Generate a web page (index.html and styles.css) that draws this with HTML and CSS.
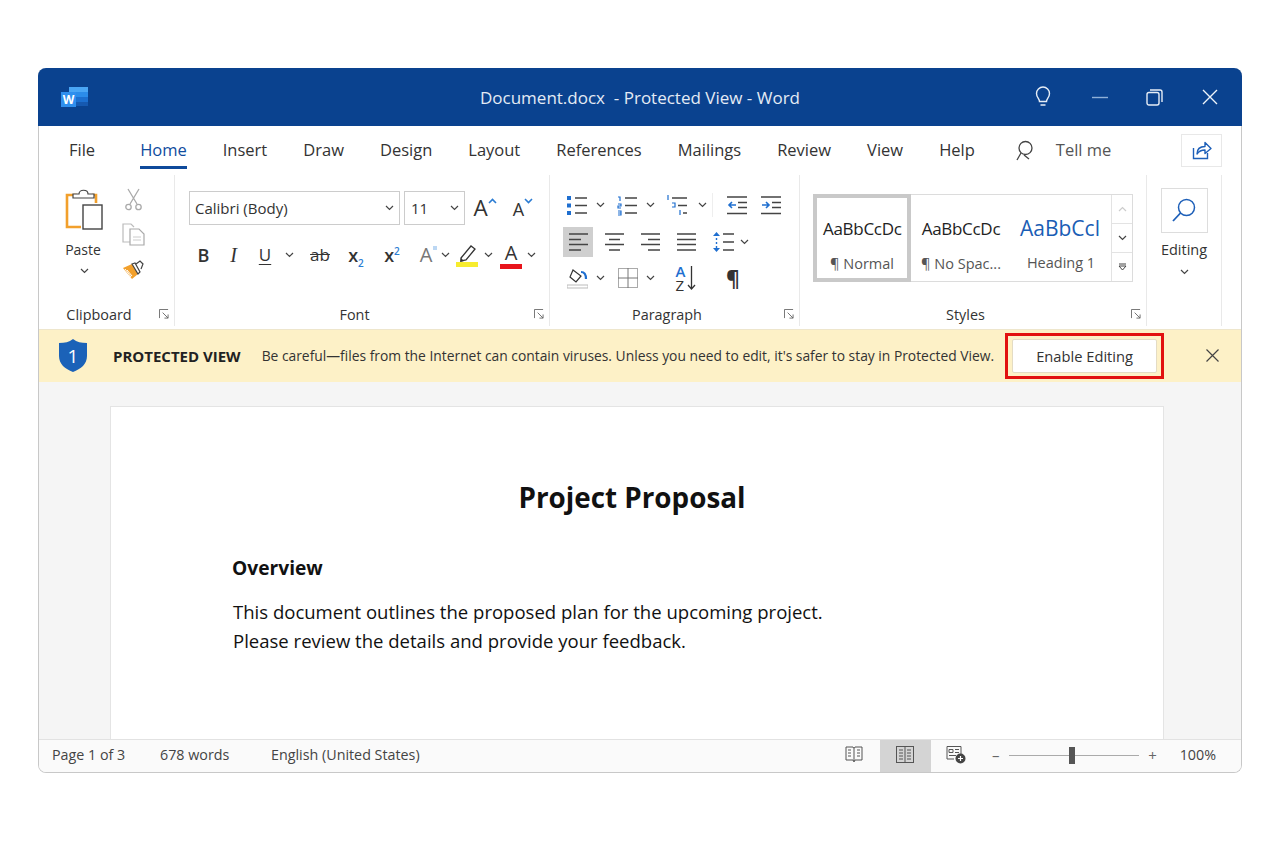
FILE: index.html
```html
<!DOCTYPE html>
<html lang="en">
<head>
  <meta charset="UTF-8">
  <title>Document.docx - Protected View - Word</title>
  <link rel="stylesheet" href="styles.css">
</head>
<body>
  <svg class="defs" width="0" height="0">
    <symbol id="chev" viewBox="0 0 9 6"><path d="M1 1l3.5 3.5L8 1" fill="none" stroke="#444" stroke-width="1.2"/></symbol>
    <symbol id="launch" viewBox="0 0 11 11"><path d="M.5 10V.5H10M4 4l6 6M10 6v4H6" fill="none" stroke="#666" stroke-width="1"/></symbol>
  </svg>

  <div class="window">
    <div class="titlebar">
      <svg class="logo" width="27" height="20" viewBox="0 0 27 20">
        <rect x="8" y="0" width="19" height="5" fill="#4aa6f5"/>
        <rect x="8" y="5" width="19" height="5" fill="#2b8cea"/>
        <rect x="8" y="10" width="19" height="5" fill="#1c6fd0"/>
        <rect x="8" y="15" width="19" height="4" fill="#1659b0"/>
        <rect x="0" y="5" width="15" height="15" fill="#2f8fee"/>
        <text x="7.5" y="17" text-anchor="middle" class="logo-w">W</text>
      </svg>
      <div class="doc-title">Document.docx&nbsp; - Protected View - Word</div>
      <div class="win-btns">
        <svg width="20" height="24" viewBox="0 0 20 24"><path d="M6.5 16.5c0-3-3-4-3-8a6.5 6.5 0 0 1 13 0c0 4-3 5-3 8zM7.5 20h5" fill="none" stroke="#e6edf6" stroke-width="1.4"/></svg>
        <svg width="16" height="16" viewBox="0 0 16 16"><path d="M0 8.5h16" stroke="#8fb0d8" stroke-width="1.4"/></svg>
        <svg width="17" height="17" viewBox="0 0 17 17"><rect x="1" y="3.5" width="12" height="12.5" rx="2" fill="none" stroke="#e6edf6" stroke-width="1.4"/><path d="M4 1h10a2 2 0 0 1 2 2v10" fill="none" stroke="#e6edf6" stroke-width="1.4"/></svg>
        <svg width="16" height="16" viewBox="0 0 16 16"><path d="M1 1l14 14M15 1L1 15" stroke="#eef3f9" stroke-width="1.4"/></svg>
      </div>
    </div>

    <div class="tabs">
      <span class="tab tab-file">File</span>
      <span class="tab active">Home</span>
      <span class="tab">Insert</span>
      <span class="tab">Draw</span>
      <span class="tab">Design</span>
      <span class="tab">Layout</span>
      <span class="tab">References</span>
      <span class="tab">Mailings</span>
      <span class="tab">Review</span>
      <span class="tab">View</span>
      <span class="tab">Help</span>
      <svg class="tell-icon" width="20" height="22" viewBox="0 0 20 22"><circle cx="10.5" cy="8" r="6.5" fill="none" stroke="#444" stroke-width="1.3"/><path d="M6 13l-4 7M9 15l5 4" fill="none" stroke="#444" stroke-width="1.3"/></svg>
      <span class="tab tell">Tell me</span>
      <div class="share">
        <svg width="20" height="19" viewBox="0 0 20 19"><path d="M1.5 7v10.5h14V12" fill="none" stroke="#1d5fb8" stroke-width="1.4"/><path d="M5 13c0-5 3-7.500 8-7.500V1.500l6 6-6 5V9c-4 0-6 1-8 4z" fill="none" stroke="#1d5fb8" stroke-width="1.4" stroke-linejoin="round"/></svg>
      </div>
    </div>

    <div class="ribbon">
      <section class="group group-clip">
        <div class="group-body clip-body">
          <div class="paste">
            <svg width="40" height="43" viewBox="0 0 40 43"><path d="M13 7H3v32h14" fill="none" stroke="#f2a02c" stroke-width="2.6"/><path d="M28 7h4v8" fill="none" stroke="#f2a02c" stroke-width="2.6"/><path d="M9 10V6h6c0-5 9-5 9 0h6v4z" fill="#fff" stroke="#444" stroke-width="1.200"/><rect x="19" y="17" width="19" height="24" fill="#fff" stroke="#444" stroke-width="1.400"/></svg>
            <span class="paste-label">Paste</span>
            <svg class="chev" width="9" height="6"><use href="#chev"/></svg>
          </div>
          <div class="clip-tools">
            <svg width="17" height="23" viewBox="0 0 17 23"><path d="M3 1l9 15M14 1L5 16" stroke="#aaa" stroke-width="1.300" fill="none"/><circle cx="3.500" cy="19" r="2.700" fill="none" stroke="#aaa" stroke-width="1.300"/><circle cx="13.500" cy="19" r="2.700" fill="none" stroke="#aaa" stroke-width="1.300"/></svg>
            <svg width="23" height="23" viewBox="0 0 23 23"><path d="M8 19H1V1h8l3 3" fill="none" stroke="#bbb" stroke-width="1.200"/><path d="M8 6h9l5 5v11H8z" fill="#fff" stroke="#aaa" stroke-width="1.200"/><path d="M11 14h8M11 17h8" stroke="#ccc" stroke-width="1"/></svg>
            <svg width="22" height="22" viewBox="0 0 22 22"><path d="M1 10l9-4 6 10-6 5z" fill="#f2a02c"/><path d="M5 12l5 6M3 11l6 8" stroke="#fff" stroke-width="1"/><path d="M10 6l6 10 2-2-5-9zM14 6l4-3 3 3-2 5" fill="#fff" stroke="#444" stroke-width="1.200"/></svg>
          </div>
        </div>
        <div class="group-label"><span>Clipboard</span><svg class="launch" width="10" height="10"><use href="#launch"/></svg></div>
      </section>

      <section class="group group-font">
        <div class="group-body font-body">
          <div class="font-row-top">
            <div class="select select-font"><span>Calibri (Body)</span><svg width="9" height="6"><use href="#chev"/></svg></div>
            <div class="select select-size"><span>11</span><svg width="9" height="6"><use href="#chev"/></svg></div>
            <div class="grow-btn">
              <span class="big-a">A</span>
              <svg width="9" height="6" viewBox="0 0 9 6"><path d="M1 5l3.500-3.500L8 5" fill="none" stroke="#2b7cd3" stroke-width="1.600"/></svg>
            </div>
            <div class="grow-btn shrink">
              <span class="small-a">A</span>
              <svg width="9" height="6" viewBox="0 0 9 6"><path d="M1 1l3.500 3.500L8 1" fill="none" stroke="#2b7cd3" stroke-width="1.600"/></svg>
            </div>
          </div>
          <div class="font-row-bottom">
            <span class="fmt fmt-b">B</span>
            <span class="fmt fmt-i">I</span>
            <span class="fmt fmt-u">U</span>
            <svg width="9" height="6"><use href="#chev"/></svg>
            <span class="fmt fmt-s">ab</span>
            <span class="fmt fmt-x">x<sub>2</sub></span>
            <span class="fmt fmt-x">x<sup>2</sup></span>
            <span class="fmt fmt-effect">A</span>
            <svg width="9" height="6"><use href="#chev"/></svg>
            <svg width="22" height="24" viewBox="0 0 22 24"><path d="M5 15L15 3l4 3-9 11-5 1z" fill="#fff" stroke="#333" stroke-width="1.300"/><path d="M5 15l3 3-4 1z" fill="#333"/><rect x="0" y="19" width="22" height="5" fill="#f7ec2e"/></svg>
            <svg width="9" height="6"><use href="#chev"/></svg>
            <span class="fmt fmt-color">A</span>
            <svg width="9" height="6"><use href="#chev"/></svg>
          </div>
        </div>
        <div class="group-label"><span>Font</span><svg class="launch" width="10" height="10"><use href="#launch"/></svg></div>
      </section>

      <section class="group group-para">
        <div class="group-body para-body">
          <div class="para-row para-row-1">
            <svg width="21" height="21" viewBox="0 0 21 21"><g fill="#1f6fd0"><rect x="0" y="1" width="4" height="4"/><rect x="0" y="8.500" width="4" height="4"/><rect x="0" y="16" width="4" height="4"/></g><path d="M8 3h12M8 10.500h12M8 18h12" stroke="#444" stroke-width="1.300"/></svg>
            <svg width="9" height="6"><use href="#chev"/></svg>
            <svg width="21" height="21" viewBox="0 0 21 21"><path d="M1 2h2v4M1 9h3v2H1v2h3M1 16h3v4H1M1 18h3" fill="none" stroke="#1f6fd0" stroke-width="1.200"/><path d="M8 3h12M8 10.500h12M8 18h12" stroke="#444" stroke-width="1.300"/></svg>
            <svg width="9" height="6"><use href="#chev"/></svg>
            <svg width="21" height="21" viewBox="0 0 21 21"><path d="M1 0v5M5 8h3v4H5M13 15v5" fill="none" stroke="#1f6fd0" stroke-width="1.200"/><path d="M5 3h15M11 10.500h9M16 18h4" stroke="#444" stroke-width="1.300"/></svg>
            <svg width="9" height="6"><use href="#chev"/></svg>
            <span class="sep"></span>
            <svg width="20" height="19" viewBox="0 0 20 19"><path d="M0 1h20M11 6.500h9M11 11.500h9M0 17.500h20" stroke="#444" stroke-width="1.300"/><path d="M9 9H2M5 6L2 9l3 3" fill="none" stroke="#1f6fd0" stroke-width="1.600"/></svg>
            <svg width="20" height="19" viewBox="0 0 20 19"><path d="M0 1h20M11 6.500h9M11 11.500h9M0 17.500h20" stroke="#444" stroke-width="1.300"/><path d="M1 9h7M5 6l3 3-3 3" fill="none" stroke="#1f6fd0" stroke-width="1.600"/></svg>
          </div>
          <div class="para-row para-row-2">
            <div class="align-on"><svg width="19" height="18" viewBox="0 0 19 18"><path d="M0 1h19M0 6.500h12M0 11.500h19M0 17h12" stroke="#444" stroke-width="1.300"/></svg></div>
            <svg width="19" height="18" viewBox="0 0 19 18"><path d="M0 1h19M4 6.500h11M0 11.500h19M4 17h11" stroke="#444" stroke-width="1.300"/></svg>
            <svg width="19" height="18" viewBox="0 0 19 18"><path d="M0 1h19M7 6.500h12M0 11.500h19M7 17h12" stroke="#444" stroke-width="1.300"/></svg>
            <svg width="19" height="18" viewBox="0 0 19 18"><path d="M0 1h19M0 6.500h19M0 11.500h19M0 17h19" stroke="#444" stroke-width="1.300"/></svg>
            <svg width="21" height="20" viewBox="0 0 21 20"><path d="M3.500 2v16" stroke="#1f6fd0" stroke-width="1.400" stroke-dasharray="2 2"/><path d="M0 4l3.500-4L7 4zM0 16l3.500 4L7 16z" fill="#1f6fd0"/><path d="M10 2h11M10 10h11M10 18h11" stroke="#444" stroke-width="1.300"/></svg>
            <svg width="9" height="6"><use href="#chev"/></svg>
          </div>
          <div class="para-row para-row-3">
            <svg width="21" height="22" viewBox="0 0 21 22"><path d="M6 3l8 6-5 6-6-5z" fill="#fff" stroke="#333" stroke-width="1.200"/><path d="M14 5c4 0 5 3 5 7" fill="none" stroke="#1f6fd0" stroke-width="2.200"/><path d="M0 18h21v3H0z" fill="#fff" stroke="#bbb" stroke-width="1"/></svg>
            <svg width="9" height="6"><use href="#chev"/></svg>
            <svg width="20" height="20" viewBox="0 0 20 20"><rect x=".5" y=".5" width="19" height="19" fill="none" stroke="#aaa"/><path d="M10 0v20M0 10h20" stroke="#777" stroke-width="1"/></svg>
            <svg width="9" height="6"><use href="#chev"/></svg>
            <div class="sort"><span class="sort-letters"><span class="sort-a">A</span><span>Z</span></span><svg width="9" height="24" viewBox="0 0 9 24"><path d="M4.500 0v23M1 19l3.500 4L8 19" fill="none" stroke="#333" stroke-width="1.300"/></svg></div>
            <span class="pilcrow">¶</span>
          </div>
        </div>
        <div class="group-label"><span>Paragraph</span><svg class="launch" width="10" height="10"><use href="#launch"/></svg></div>
      </section>

      <section class="group group-styles">
        <div class="group-body styles-body">
          <div class="gallery">
            <div class="style-item style-normal">
              <div class="preview">AaBbCcDc</div>
              <div class="style-name">¶ Normal</div>
            </div>
            <div class="style-item">
              <div class="preview">AaBbCcDc</div>
              <div class="style-name">¶ No Spac...</div>
            </div>
            <div class="style-item">
              <div class="preview preview-head">AaBbCcl</div>
              <div class="style-name">Heading 1</div>
            </div>
            <div class="scroller">
              <div><svg width="9" height="6" viewBox="0 0 9 6"><path d="M1 5l3.500-3.500L8 5" fill="none" stroke="#ccc" stroke-width="1.200"/></svg></div>
              <div><svg width="9" height="6"><use href="#chev"/></svg></div>
              <div><svg width="9" height="8" viewBox="0 0 9 8"><path d="M1 1h7M1 3l3.500 4L8 3z" fill="none" stroke="#444" stroke-width="1"/></svg></div>
            </div>
          </div>
        </div>
        <div class="group-label"><span>Styles</span><svg class="launch" width="10" height="10"><use href="#launch"/></svg></div>
      </section>

      <section class="group group-edit">
        <div class="edit-body">
          <div class="edit-box"><svg width="24" height="25" viewBox="0 0 24 25"><circle cx="14.500" cy="9.500" r="8" fill="none" stroke="#1d5fb8" stroke-width="1.500"/><path d="M8.500 15L1 23" stroke="#1d5fb8" stroke-width="1.800"/></svg></div>
          <span class="edit-label">Editing</span>
          <svg width="9" height="6"><use href="#chev"/></svg>
        </div>
      </section>
    </div>

    <div class="banner">
      <svg class="shield" width="28" height="33" viewBox="0 0 28 33">
        <path d="M14 0c4 3 8 4 14 4v13c0 8-6 13-14 16C6 30 0 25 0 17V4c6 0 10-1 14-4z" fill="#1b62b8"/>
        <text x="14" y="24" text-anchor="middle" class="shield-num">1</text>
      </svg>
      <strong class="banner-title">PROTECTED VIEW</strong>
      <span class="banner-text">Be careful—files from the Internet can contain viruses. Unless you need to edit, it's safer to stay in Protected View.</span>
      <div class="enable-wrap"><button class="enable">Enable Editing</button></div>
      <svg class="banner-close" width="13" height="13" viewBox="0 0 13 13"><path d="M.5.500l12 12M12.500.500l-12 12" stroke="#444" stroke-width="1.200"/></svg>
    </div>

    <div class="doc-area">
      <div class="page">
        <h1>Project Proposal</h1>
        <h2>Overview</h2>
        <p>This document outlines the proposed plan for the upcoming project.<br>Please review the details and provide your feedback.</p>
      </div>
    </div>

    <div class="statusbar">
      <span class="st-page">Page 1 of 3</span>
      <span class="st-words">678 words</span>
      <span class="st-lang">English (United States)</span>
      <div class="st-right">
        <div class="view-btn"><svg width="18" height="17" viewBox="0 0 18 17"><path d="M9 2.500L8 1H1v13h7l1 2 1-2h7V1h-7zM9 2.500V15M3 4h3M3 7h3M3 10h3M12 4h3M12 7h3M12 10h3" fill="none" stroke="#555" stroke-width="1"/></svg></div>
        <div class="view-btn view-on"><svg width="18" height="17" viewBox="0 0 18 17"><rect x=".5" y=".5" width="17" height="16" fill="none" stroke="#555"/><path d="M9 0v17M3 4h4M3 7h4M3 10h4M3 13h4M11 4h4M11 7h4M11 10h4M11 13h4" stroke="#555" stroke-width="1"/></svg></div>
        <div class="view-btn"><svg width="20" height="18" viewBox="0 0 20 18"><path d="M1 .500h14v8M1 .500V13h7M3 3.500h4v3H3zM9 3.500h4M9 6.500h4M3 9.500h7" fill="none" stroke="#555" stroke-width="1"/><circle cx="14.500" cy="12.500" r="5" fill="#444"/><path d="M14.500 10v5M12 12.500h5" stroke="#fff" stroke-width="1.200"/></svg></div>
        <span class="zoom-sign zoom-minus">–</span>
        <div class="slider"><span class="thumb"></span></div>
        <span class="zoom-sign">+</span>
        <span class="zoom-val">100%</span>
      </div>
    </div>
  </div>
</body>
</html>
```

FILE: styles.css
```css
* {
  box-sizing: border-box;
}

body {
  margin: 0;
  padding: 68px 38px 0;
  background: #fff;
  font-family: "Open Sans", "Noto Sans", sans-serif;
  color: #333;
}

.defs {
  display: block;
  height: 0;
}

svg {
  display: block;
  flex: none;
}

.window {
  height: 705px;
  border: 1px solid #c8c8c8;
  border-top: 0;
  border-radius: 8px;
  display: flex;
  flex-direction: column;
  background: #fff;
}

/* title bar */
.titlebar {
  height: 58px;
  flex: none;
  margin: 0 -1px;
  border-radius: 8px 8px 0 0;
  background: #0a428f;
  display: flex;
  align-items: center;
  padding: 0 24px 0 23px;
  color: #e4ebf5;
}

.logo {
  margin-top: -1px;
}

.logo-w {
  font: bold 12px "Open Sans", sans-serif;
  fill: #fff;
}

.doc-title {
  flex: 1;
  text-align: center;
  font-size: 17px;
  margin-left: 159px;
}

.win-btns {
  display: flex;
  align-items: center;
  width: 185px;
  justify-content: space-between;
}

/* tabs */
.tabs {
  height: 49px;
  flex: none;
  display: flex;
  align-items: center;
  padding: 0 19px 0 30px;
  gap: 36px;
  font-size: 16.500px;
}

.tab {
  position: relative;
  line-height: 46px;
  margin-bottom: 2px;
}

.tab-file {
  margin-right: 9px;
}

.tab.active {
  color: #0f4c9e;
}

.tab.active::after {
  content: "";
  position: absolute;
  left: 0;
  right: 0;
  bottom: 4px;
  height: 3px;
  background: #0f4a9b;
}

.tell-icon {
  margin-left: 4px;
}

.tell {
  margin-left: -15px;
  color: #555;
}

.share {
  margin-left: auto;
  width: 41px;
  height: 33px;
  border: 1px solid #e8e8e8;
  display: flex;
  align-items: center;
  justify-content: center;
}

/* ribbon */
.ribbon {
  height: 154px;
  flex: none;
  display: flex;
}

.group {
  display: flex;
  flex-direction: column;
  border-right: 1px solid #e9e9e9;
  margin-bottom: 3px;
}

.group-clip { width: 136px; }
.group-font { width: 375px; }
.group-para { width: 250px; }
.group-styles { width: 347px; }
.group-edit { width: 75px; }

.group-body {
  flex: 1;
}

.group-label {
  display: flex;
  align-items: center;
  height: 24px;
  font-size: 14.400px;
  color: #333;
  padding-right: 4px;
}

.group-label span {
  flex: 1;
  text-align: center;
}

.launch {
  margin-right: 1px;
}

/* clipboard */
.clip-body {
  display: flex;
  padding: 13px 0 0 25px;
  gap: 17px;
}

.paste {
  width: 40px;
  display: flex;
  flex-direction: column;
  align-items: center;
}

.paste-label {
  font-size: 14px;
  margin: 9px 2px 8px 0;
  line-height: 20px;
}

.clip-tools {
  width: 24px;
  height: 92px;
  display: flex;
  flex-direction: column;
  align-items: center;
  justify-content: space-between;
  gap: 10px;
}

/* font */
.font-body {
  padding: 16px 0 0 14px;
}

.font-row-top {
  display: flex;
  align-items: center;
  height: 34px;
  gap: 4px;
}

.select {
  flex: none;
  height: 34px;
  border: 1px solid #ccc;
  display: flex;
  align-items: center;
  justify-content: space-between;
  padding: 0 5px;
  font-size: 15px;
}

.select-font { width: 211px; }
.select-size { width: 61px; padding-left: 6px; }

.grow-btn {
  width: 28px;
  flex: none;
  margin-left: 2px;
  display: flex;
  align-items: flex-start;
  justify-content: center;
}

.grow-btn.shrink {
  margin-left: 6px;
}

.big-a {
  font-size: 22.500px;
  line-height: 30px;
}

.small-a {
  font-size: 18px;
  line-height: 30px;
  margin-top: 1px;
}

.grow-btn svg {
  margin-top: 5px;
}

.font-row-bottom {
  display: grid;
  grid-template-columns: 29px 31px 32px 16px 46px 26px 46px 22px 16px 28px 14px 32px 8px;
  align-items: center;
  justify-items: center;
  height: 30px;
  margin-top: 15px;
}

.fmt {
  font-size: 18px;
  line-height: 26px;
}

.fmt-b { font-weight: 600; }
.fmt-i { font-style: italic; font-family: "Liberation Serif", serif; font-size: 20px; }
.fmt-u { text-decoration: underline; text-underline-offset: 3px; font-size: 17px; }
.fmt-s { text-decoration: line-through; font-size: 17px; }
.fmt-x { font-weight: 600; font-size: 18px; }
.fmt-x sub, .fmt-x sup { font-size: 10px; color: #2b7cd3; line-height: 0; }

.fmt-effect {
  color: #777;
  font-size: 20px;
  margin-right: -5px;
}

.fmt-effect::after {
  content: "";
  display: inline-block;
  width: 4px;
  height: 4px;
  margin-left: 1px;
  vertical-align: 12px;
  background: #bcd7f3;
}

.fmt-color {
  font-size: 20px;
  line-height: 22px;
  width: 22px;
  text-align: center;
  border-bottom: 5px solid #e8141c;
}

/* paragraph */
.para-body {
  padding: 15px 0 0 13px;
  display: flex;
  flex-direction: column;
  gap: 6.5px;
}

.para-row {
  display: grid;
  align-items: center;
  justify-items: center;
  height: 30px;
}

.para-row-1 { grid-template-columns: 28px 18px 36px 10px 44px 6px 15px 34px 34px; }
.para-row-2 { grid-template-columns: 30px 42px 30px 42px 32px 10px; }
.para-row-3 { grid-template-columns: 28px 18px 38px 6px 66px 28px; }

.sep {
  width: 1px;
  height: 24px;
  background: #eee;
}

.align-on {
  width: 30px;
  height: 30px;
  background: #cfcfcf;
  display: flex;
  align-items: center;
  justify-content: center;
}

.sort {
  display: flex;
  align-items: center;
  gap: 2px;
}

.sort-letters {
  display: flex;
  flex-direction: column;
  font-size: 15px;
  line-height: 14px;
  font-weight: 400;
}

.sort-a {
  color: #1f6fd0;
  font-weight: 600;
}

.pilcrow {
  font-size: 21px;
  font-weight: 700;
  line-height: 26px;
}

/* styles */
.styles-body {
  padding: 19px 0 0 13px;
}

.gallery {
  display: flex;
  width: 320px;
  height: 88px;
  border: 1px solid #dcdcdc;
}

.style-item {
  width: 100px;
  padding: 0 9px;
  text-align: center;
}

.style-normal {
  width: 98px;
  margin: -1px 0 -1px -1px;
  border: 4px solid #c9c9c9;
  padding: 0 6px;
}

.preview {
  height: 46px;
  margin-top: 13px;
  line-height: 42px;
  font-size: 17px;
  color: #222;
  white-space: nowrap;
  letter-spacing: -0.3px;
}

.style-normal .preview {
  margin-top: 10px;
}

.preview-head {
  margin-top: 12px;
  font-size: 21px;
  color: #1a5db5;
  letter-spacing: 0;
  text-align: left;
}

.style-name {
  font-size: 14.500px;
  line-height: 20px;
  margin-top: 0;
  color: #555;
  white-space: nowrap;
}

.scroller {
  width: 21px;
  margin-left: auto;
  border-left: 1px solid #e3e3e3;
  display: flex;
  flex-direction: column;
}

.scroller div {
  flex: 1;
  display: flex;
  align-items: center;
  justify-content: center;
  border-bottom: 1px solid #e3e3e3;
}

.scroller div:last-child {
  border-bottom: 0;
}

/* editing */
.edit-body {
  display: flex;
  flex-direction: column;
  align-items: center;
  padding-top: 13px;
}

.edit-box {
  width: 47px;
  height: 45px;
  border: 1px solid #ddd;
  display: flex;
  align-items: center;
  justify-content: center;
}

.edit-label {
  font-size: 14.500px;
  line-height: 20px;
  margin: 7px 0 9px;
}

/* protected view banner */
.banner {
  height: 53px;
  flex: none;
  background: #fdf1c7;
  box-shadow: inset 0 1px 0 #eee6cc;
  display: flex;
  align-items: center;
  padding-left: 20px;
  font-size: 13.840px;
}

.shield-num {
  font: 19px "Open Sans", sans-serif;
  fill: #fff;
}

.banner-title {
  margin-left: 26px;
  color: #222;
  font-size: 15px;
  white-space: nowrap;
}

.banner-text {
  margin-left: 21px;
  color: #333;
  white-space: nowrap;
}

.enable-wrap {
  margin-left: 11px;
  width: 159px;
  height: 46px;
  border: 3px solid #e2110f;
  display: flex;
  align-items: center;
  justify-content: center;
  flex: none;
}

.enable {
  width: 145px;
  height: 34px;
  background: #fff;
  border: 1px solid #e4dcc4;
  border-radius: 2px;
  font: 14.700px "Open Sans", sans-serif;
  color: #333;
  padding: 0;
}

.banner-close {
  margin-left: 42px;
}

/* document */
.doc-area {
  flex: 1;
  min-height: 0;
  background: #f5f5f5;
  padding: 24px 77px 0 71px;
  overflow: hidden;
}

.page {
  height: 400px;
  background: #fff;
  border: 1px solid #e4e4e4;
  padding: 0 121px;
  color: #111;
}

.page h1 {
  margin: 68px 0 0;
  font-size: 27.800px;
  line-height: 44px;
  text-align: center;
  font-weight: 700;
  padding-right: 10px;
}

.page h2 {
  margin: 34px 0 0;
  font-size: 19.200px;
  line-height: 30px;
  font-weight: 700;
}

.page p {
  margin: 14px 0 0 1px;
  font-size: 18.540px;
  line-height: 29px;
  white-space: nowrap;
}

/* status bar */
.statusbar {
  height: 33px;
  flex: none;
  border-radius: 0 0 7px 7px;
  background: #fafafa;
  border-top: 1px solid #e2e2e2;
  display: flex;
  align-items: center;
  padding: 0 25px 0 13px;
  font-size: 14.300px;
  color: #444;
}

.st-page { width: 108px; margin-top: -3px; }
.st-words { width: 111px; margin-top: -3px; }
.st-lang { margin-top: -3px; }

.st-right {
  margin-left: auto;
  display: flex;
  align-items: center;
  height: 100%;
}

.view-btn {
  width: 51px;
  height: 100%;
  padding-bottom: 3px;
  display: flex;
  align-items: center;
  justify-content: center;
}

.view-on {
  background: #d4d4d4;
}

.zoom-sign {
  width: 12px;
  margin-top: -3px;
  text-align: center;
  font-size: 15px;
  color: #666;
}

.zoom-minus {
  margin-left: 8px;
}

.slider {
  position: relative;
  width: 130px;
  height: 1px;
  background: #aaa;
  margin: -2px 8px 0 7px;
}

.thumb {
  position: absolute;
  left: 60px;
  top: -8px;
  width: 6px;
  height: 17px;
  background: #555;
}

.zoom-val {
  margin: -3px 0 0 21px;
}
```
